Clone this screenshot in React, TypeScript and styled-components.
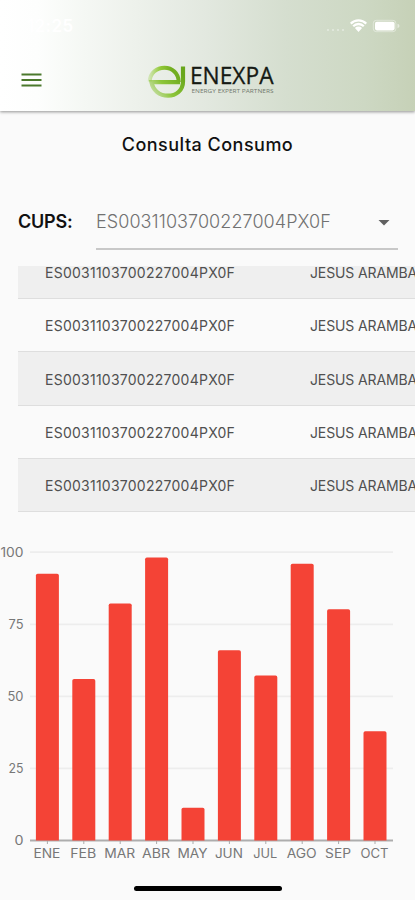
import React from 'react';
import styled, { createGlobalStyle } from 'styled-components';

const GlobalStyle = createGlobalStyle`
  * { box-sizing: border-box; }
  body { margin: 0; background: #fafafa; overflow: hidden; }
`;

const Screen = styled.div`
  width: 415px;
  height: 900px;
  overflow: hidden;
  display: flex;
  flex-direction: column;
  background: #fafafa;
  color: #111;
  font-family: Inter, 'Open Sans', sans-serif;
`;

const Header = styled.header`
  flex: none;
  height: 111px;
  background: linear-gradient(90deg, #fff 0%, #fdfefd 9%, #f5f8f4 20%, #edf1eb 33%, #e2e8df 50%, #d5decf 69%, #cdd8c3 88%, #c6d1b7 100%);
  box-shadow: 0 1px 3px rgba(0, 0, 0, 0.42);
`;

const StatusBar = styled.div`
  height: 52px;
  padding: 0 15px 0 27px;
  display: flex;
  align-items: center;
  justify-content: space-between;
`;

const Clock = styled.span`
  color: #fff;
  font-size: 17px;
  font-weight: 600;
  letter-spacing: 0.4px;
`;

const AppBar = styled.div`
  height: 59px;
  padding-left: 21px;
  display: flex;
  align-items: center;
`;

const MenuButton = styled.button`
  width: 21px;
  height: 20px;
  margin-top: -3px;
  padding: 0;
  border: 0;
  background: none;
  display: flex;
`;

const Brand = styled.div`
  margin-left: 104px;
  display: flex;
`;

const Title = styled.h1`
  flex: none;
  margin: 0;
  height: 67px;
  line-height: 67px;
  text-align: center;
  font-size: 18px;
  font-weight: 500;
  letter-spacing: 0.48px;
`;

const Field = styled.div`
  flex: none;
  margin: 17px 17px 0 18px;
  height: 55px;
  display: flex;
`;

const FieldLabel = styled.label`
  width: 78px;
  line-height: 54px;
  font-size: 18px;
  font-weight: 600;
  letter-spacing: -0.2px;
`;

const Select = styled.div`
  flex: 1;
  display: flex;
  align-items: center;
  justify-content: space-between;
  padding: 0 8px 0 0;
  border-bottom: 2px solid #c8c8c8;
  color: #717171;
  font-size: 18px;
  font-weight: 300;
  letter-spacing: 0.07px;
  white-space: nowrap;
`;

const Caret = styled.svg`
  margin-top: 3px;
`;

const TableViewport = styled.div`
  flex: none;
  height: 246px;
  margin: 16px 0 0 18px;
  overflow: hidden;
  display: flex;
  flex-direction: column;
  justify-content: flex-end;
`;

const Row = styled.div<{ $shaded: boolean }>`
  flex: none;
  height: 53.2px;
  padding: 1px 0 0 27px;
  display: grid;
  grid-template-columns: 265px 200px;
  align-items: center;
  background: ${(p) => (p.$shaded ? '#efefef' : '#fafafa')};
  border-bottom: 1.5px solid #dedede;
`;

const Cell = styled.span<{ $tracking: number }>`
  color: #505050;
  font-size: 14px;
  letter-spacing: ${(p) => p.$tracking}px;
  white-space: nowrap;
`;

const Chart = styled.svg`
  flex: none;
  display: block;
  margin-top: 28px;
  font-family: Inter, sans-serif;
`;

const HomeIndicator = styled.div`
  flex: none;
  width: 148px;
  height: 5px;
  margin: 16px 0 0 134px;
  border-radius: 3px;
  background: #000;
`;

const SUPPLY = 'ES0031103700227004PX0F';

const months = [
  { name: 'ENE', value: 92.5, width: 27 },
  { name: 'FEB', value: 56, width: 26 },
  { name: 'MAR', value: 82.2, width: 31 },
  { name: 'ABR', value: 98.2, width: 28 },
  { name: 'MAY', value: 11.4, width: 30 },
  { name: 'JUN', value: 66, width: 28 },
  { name: 'JUL', value: 57.2, width: 24 },
  { name: 'AGO', value: 96, width: 30 },
  { name: 'SEP', value: 80.2, width: 26 },
  { name: 'OCT', value: 37.9, width: 28 },
];

const ticks = [
  { value: 100, width: 23 },
  { value: 75, width: 15 },
  { value: 50, width: 16 },
  { value: 25, width: 15 },
  { value: 0, width: 9 },
];

const BASE = 300.5;
const UNIT = 2.883;

function StatusIcons() {
  return (
    <svg width="76" height="18" viewBox="324 17 76 18" fill="#fff">
      <g opacity="0.45">
        <circle cx="328" cy="30" r="1" />
        <circle cx="333" cy="30" r="1" />
        <circle cx="338" cy="30" r="1" />
        <circle cx="343" cy="30" r="1" />
      </g>
      <path d="M350 22.8a12 12 0 0 1 17 0l-1.5 1.7a9.8 9.8 0 0 0-14 0z" />
      <path d="M352.4 25.4a8.6 8.6 0 0 1 12.2 0l-1.6 1.7a6.3 6.3 0 0 0-9 0z" />
      <path d="M354.9 28.1a5.1 5.1 0 0 1 7.2 0l-3.6 3.9z" />
      <rect x="373.3" y="20.3" width="22.6" height="11.4" rx="3" fill="none" stroke="#fff" strokeOpacity="0.4" strokeWidth="1" />
      <rect x="375" y="21.8" width="19.6" height="8.6" rx="1.8" />
      <path d="M397.5 23.8q2 .6 2 2.2t-2 2.2z" opacity="0.5" />
    </svg>
  );
}

function Logo() {
  return (
    <svg width="130" height="38" viewBox="146 62 130 38">
      <defs>
        <linearGradient id="leaf" x1="148" y1="92" x2="178" y2="68" gradientUnits="userSpaceOnUse">
          <stop offset="0" stopColor="#8fc640" stopOpacity="0.25" />
          <stop offset="0.45" stopColor="#8dc63a" />
          <stop offset="1" stopColor="#68a61b" />
        </linearGradient>
        <linearGradient id="arc" x1="148" y1="80" x2="172" y2="80" gradientUnits="userSpaceOnUse">
          <stop offset="0" stopColor="#a5d45a" stopOpacity="0.3" />
          <stop offset="0.5" stopColor="#93ca39" />
          <stop offset="1" stopColor="#72ae20" />
        </linearGradient>
      </defs>
      <path d="M149.7 80.5C150 71.5 157 66.7 164.5 66.7C172 66.7 178.5 72 178.8 81" fill="none" stroke="url(#arc)" strokeWidth="4" />
      <path d="M183 65.5V80.5C183 89.5 176 94.7 168 94.7C159.5 94.7 153 89.5 151.4 81.2H180" fill="none" stroke="url(#leaf)" strokeWidth="4.2" />
      <text x="190" y="82.6" fontFamily="'Open Sans', sans-serif" fontSize="24" fill="#151a14" stroke="#151a14" strokeWidth="0.3" textLength="83.5" lengthAdjust="spacingAndGlyphs">ENEXPA</text>
      <text x="191.5" y="91.7" fontFamily="'Open Sans', sans-serif" fontSize="5.4" fill="#72796e" textLength="82" lengthAdjust="spacingAndGlyphs">ENERGY EXPERT PARTNERS</text>
    </svg>
  );
}

function ConsumptionChart() {
  return (
    <Chart width="415" height="330" viewBox="0 0 415 330">
      {ticks.map((t) => {
        const y = BASE - t.value * UNIT;
        return (
          <g key={t.value}>
            <path d={`M30 ${y}H393`} stroke={t.value ? '#ededed' : '#adadad'} strokeWidth={t.value ? 1.7 : 2} />
            <text x={23.5 - t.width} y={y + 4.6} fontSize="12.5" fill="#777" textLength={t.width} lengthAdjust="spacingAndGlyphs">
              {t.value}
            </text>
          </g>
        );
      })}
      {months.map((m, i) => {
        const cx = 47.4 + i * 36.4;
        const top = BASE - m.value * UNIT;
        return (
          <g key={m.name}>
            <path d={`M${cx} ${BASE}v3.5`} stroke="#aaa" />
            <path
              d={`M${cx - 11.5} ${BASE}V${top + 1.8}q0-1.8 1.8-1.8h19.4q1.8 0 1.8 1.8V${BASE}z`}
              fill="#f44336"
            />
            <text x={cx - m.width / 2 - 0.5} y="317.6" fontSize="12.5" fill="#777" textLength={m.width} lengthAdjust="spacingAndGlyphs">
              {m.name}
            </text>
          </g>
        );
      })}
    </Chart>
  );
}

export default function App() {
  return (
    <Screen>
      <GlobalStyle />
      <Header>
        <StatusBar>
          <Clock>12:25</Clock>
          <StatusIcons />
        </StatusBar>
        <AppBar>
          <MenuButton aria-label="Menu">
            <svg width="21" height="20" viewBox="0 0 21 20">
              <path d="M.5 4.5h20M.5 10h20M.5 15.5h20" stroke="#4b792c" strokeWidth="2" />
            </svg>
          </MenuButton>
          <Brand>
            <Logo />
          </Brand>
        </AppBar>
      </Header>
      <Title>Consulta Consumo</Title>
      <Field>
        <FieldLabel>CUPS:</FieldLabel>
        <Select>
          {SUPPLY}
          <Caret width="12" height="6" viewBox="0 0 12 6">
            <path d="M.5 0h11L6 5.6z" fill="#606060" />
          </Caret>
        </Select>
      </Field>
      <TableViewport>
        {[0, 1, 2, 3, 4].map((i) => (
          <Row key={i} $shaded={i % 2 === 0}>
            <Cell $tracking={0.25}>{SUPPLY}</Cell>
            <Cell $tracking={-0.12}>JESUS ARAMBARRI</Cell>
          </Row>
        ))}
      </TableViewport>
      <ConsumptionChart />
      <HomeIndicator />
    </Screen>
  );
}
